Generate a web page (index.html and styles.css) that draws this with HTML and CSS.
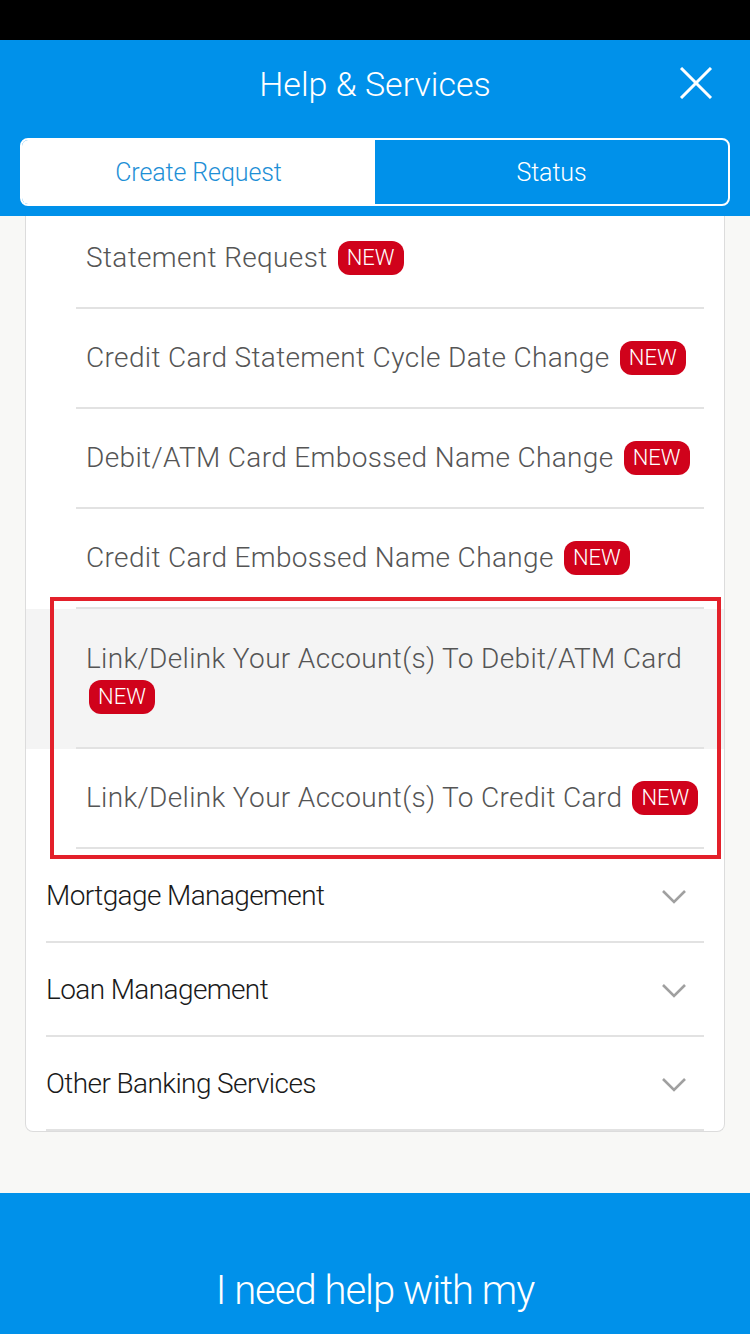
FILE: index.html
```html
<!DOCTYPE html>
<html>
<head>
	<meta charset="utf-8">
	<title>Help &amp; Services</title>
	<link rel="stylesheet" href="styles.css">
</head>
<body>
	<div class="status-bar"></div>

	<div class="header">
		<div class="title-row">
			<span></span>
			<h1 class="title">Help &amp; Services</h1>
			<svg class="close" width="34" height="32" viewBox="0 0 34 32">
				<line x1="2" y1="1" x2="32" y2="31" stroke="#fff" stroke-width="3"/>
				<line x1="32" y1="1" x2="2" y2="31" stroke="#fff" stroke-width="3"/>
			</svg>
		</div>
		<div class="tabs">
			<div class="tab active">Create Request</div>
			<div class="tab">Status</div>
		</div>
	</div>

	<div class="card">
		<div class="sub-list">
			<div class="sub-row">
				<div class="sub-inner"><p class="label">Statement Request <span class="badge">NEW</span></p></div>
			</div>
			<div class="sub-row">
				<div class="sub-inner"><p class="label">Credit Card Statement Cycle Date Change <span class="badge">NEW</span></p></div>
			</div>
			<div class="sub-row">
				<div class="sub-inner"><p class="label">Debit/ATM Card Embossed Name Change <span class="badge">NEW</span></p></div>
			</div>
			<div class="sub-row">
				<div class="sub-inner"><p class="label">Credit Card Embossed Name Change <span class="badge">NEW</span></p></div>
			</div>
			<div class="sub-row selected">
				<div class="sub-inner"><p class="label">Link/Delink Your Account(s) To Debit/ATM Card <span class="badge">NEW</span></p></div>
			</div>
			<div class="sub-row">
				<div class="sub-inner"><p class="label">Link/Delink Your Account(s) To Credit Card <span class="badge">NEW</span></p></div>
			</div>
		</div>

		<div class="group">
			<span>Mortgage Management</span>
			<svg class="chevron" width="26" height="16" viewBox="0 0 26 16"><polyline points="2,2 13,13 24,2" fill="none" stroke="#a0a0a0" stroke-width="2.6"/></svg>
		</div>
		<div class="group">
			<span>Loan Management</span>
			<svg class="chevron" width="26" height="16" viewBox="0 0 26 16"><polyline points="2,2 13,13 24,2" fill="none" stroke="#a0a0a0" stroke-width="2.6"/></svg>
		</div>
		<div class="group">
			<span>Other Banking Services</span>
			<svg class="chevron" width="26" height="16" viewBox="0 0 26 16"><polyline points="2,2 13,13 24,2" fill="none" stroke="#a0a0a0" stroke-width="2.6"/></svg>
		</div>
	</div>

	<div class="footer">
		<p class="footer-text">I need help with my</p>
	</div>

	<!-- highlight annotation drawn over the two link rows -->
	<div class="marker"></div>
</body>
</html>
```

FILE: styles.css
```css
body {
	margin: 0;
	width: 750px;
	height: 1334px;
	overflow: hidden;
	position: relative;
	background-color: #f8f8f6;
	font-family: Roboto, "Liberation Sans", sans-serif;
	font-weight: 300;
}

.status-bar {
	height: 40px;
	background-color: #000;
}

.header {
	background-color: #0091ea;
	padding-bottom: 10px;
}

.title-row {
	height: 88px;
	display: grid;
	grid-template-columns: 1fr auto 1fr;
	align-items: center;
}

.title {
	margin: 0;
	font-size: 34px;
	font-weight: 300;
	color: #fff;
}

.close {
	justify-self: end;
	margin-right: 37px;
	margin-top: -2px;
}

.tabs {
	margin: 10px 20px 0;
	height: 68px;
	box-sizing: border-box;
	border: 2px solid #fff;
	border-radius: 8px;
	overflow: hidden;
	display: flex;
}

.tab {
	flex: 1;
	display: flex;
	align-items: center;
	justify-content: center;
	font-size: 25px;
	color: #fff;
	letter-spacing: -0.1px;
}

.tab.active {
	background-color: #fff;
	color: #1e8fd6;
}

.card {
	margin: 0 25px;
	background-color: #fff;
	border: 1px solid #dcdcdc;
	border-top: none;
	border-radius: 0 0 8px 8px;
	overflow: hidden;
}

.sub-list {
	margin-top: -7px;
}

.sub-row {
	padding: 0 20px 0 50px;
}

.sub-row.selected {
	background-color: #f4f4f4;
}

.sub-inner {
	min-height: 100px;
	box-sizing: border-box;
	padding: 30px 0 30px 10px;
	display: flex;
	align-items: center;
	border-bottom: 2px solid #e2e2e2;
}

.selected .sub-inner {
	padding: 31px 0 31px 10px;
}

.label {
	margin: 0;
	font-size: 28px;
	line-height: 38px;
	color: #555;
	letter-spacing: 0.35px;
}

.badge {
	display: inline-block;
	vertical-align: 2px;
	height: 34px;
	line-height: 34px;
	padding: 0 9px;
	margin-left: 3px;
	border-radius: 12px;
	background-color: #d0021b;
	color: #fff;
	font-size: 22px;
	letter-spacing: 0;
}

.group {
	margin: 0 20px;
	height: 94px;
	box-sizing: border-box;
	display: flex;
	align-items: center;
	justify-content: space-between;
	border-bottom: 2px solid #e2e2e2;
	font-size: 28px;
	color: #1a1a1a;
	letter-spacing: -0.6px;
}

.chevron {
	margin-right: 17px;
	margin-top: 4px;
}

.footer {
	margin-top: 61px;
	height: 142px;
	background-color: #0091ea;
	padding-top: 74px;
	box-sizing: border-box;
}

.footer-text {
	margin: 0;
	text-align: center;
	font-size: 40px;
	color: #fff;
	letter-spacing: -1px;
}

.marker {
	position: absolute;
	left: 50px;
	top: 597px;
	width: 671px;
	height: 262px;
	box-sizing: border-box;
	border: 4px solid #e3202a;
}
```
